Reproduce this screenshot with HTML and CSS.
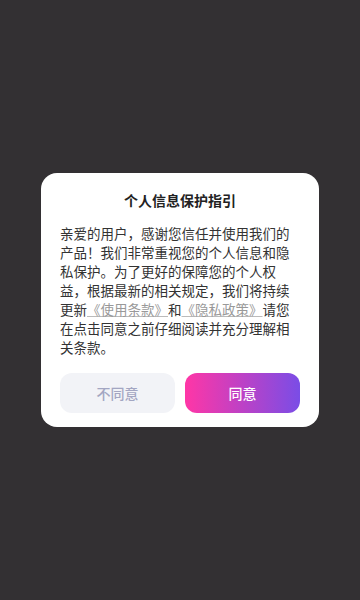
FILE: index.html
```html
<!DOCTYPE html>
<html lang="zh-CN">
<head>
    <meta charset="UTF-8">
    <meta name="viewport" content="width=device-width, initial-scale=1.0">
    <title>个人信息保护指引</title>
    <link rel="stylesheet" href="styles.css">
</head>
<body>

<div class="mask">
    <div class="dialog">
        <h2 class="title">个人信息保护指引</h2>
        <p class="content">亲爱的用户，感谢您信任并使用我们的产品！我们非常重视您的个人信息和隐私保护。为了更好的保障您的个人权益，根据最新的相关规定，我们将持续更新<a href="#" class="link">《使用条款》</a>和<a href="#" class="link">《隐私政策》</a>请您在点击同意之前仔细阅读并充分理解相关条款。</p>
        <div class="actions">
            <button class="btn btn-cancel">不同意</button>
            <button class="btn btn-ok">同意</button>
        </div>
    </div>
</div>

</body>
</html>
```

FILE: styles.css
```css
body {
    margin: 0;
    background-color: #333033;
    font-family: "Noto Sans CJK SC", "Noto Sans", sans-serif;
}
.mask {
    display: flex;
    align-items: center;
    justify-content: center;
    height: 100vh;
}
.dialog {
    width: 278px;
    box-sizing: border-box;
    padding: 17px 19px 14px;
    background: #fff;
    border-radius: 16px;
}
.title {
    margin: 0;
    font-size: 14px;
    line-height: 20px;
    font-weight: bold;
    color: #222;
    text-align: center;
}
.content {
    margin: 14px 0 0;
    font-size: 13.5px;
    line-height: 19px;
    color: #333;
}
.link {
    color: #999;
    text-decoration: underline;
    text-decoration-color: #bbb;
}
.actions {
    display: flex;
    gap: 10px;
    margin-top: 16px;
}
.btn {
    flex: 1;
    height: 40px;
    border: none;
    border-radius: 12px;
    font-family: inherit;
    font-size: 14px;
    font-weight: 500;
}
.btn-cancel {
    background: #f2f3f7;
    color: #a3a6c2;
}
.btn-ok {
    background: linear-gradient(90deg, #ff36a6, #7a4de6);
    color: #fff;
}
```
